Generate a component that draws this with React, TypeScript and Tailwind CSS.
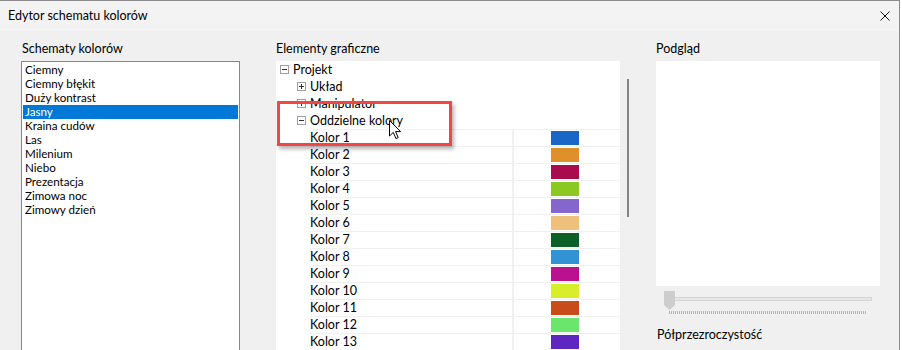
const schemes = [
  "Ciemny",
  "Ciemny błękit",
  "Duży kontrast",
  "Jasny",
  "Kraina cudów",
  "Las",
  "Milenium",
  "Niebo",
  "Prezentacja",
  "Zimowa noc",
  "Zimowy dzień",
];

const colors = [
  "#1a66c7",
  "#e0902a",
  "#a80c4c",
  "#8bc922",
  "#8466cc",
  "#eec07b",
  "#0d5f28",
  "#3193d3",
  "#b9118f",
  "#d9ee2b",
  "#c84c1a",
  "#6be66c",
  "#5f26bf",
];

function Expander({ open }: { open: boolean }) {
  return (
    <svg width="9" height="9" viewBox="0 0 9 9" className="shrink-0">
      <rect x="0.5" y="0.5" width="8" height="8" fill="#fff" stroke="#a0a0a0" />
      <path d="M2 4.5h5" stroke="#333" />
      {!open && <path d="M4.5 2v5" stroke="#333" />}
    </svg>
  );
}

function TreeNode({ label, indent, open }: { label: string; indent: number; open: boolean }) {
  return (
    <div className="flex h-[17px] items-center gap-[4px]" style={{ paddingLeft: indent }}>
      <Expander open={open} />
      <span>{label}</span>
    </div>
  );
}

function Cursor() {
  return (
    <svg width="13" height="20" viewBox="0 0 13 20" className="absolute left-[389px] top-[120px]">
      <path
        d="M0.5 0.5 L0.5 16 L4.3 12.4 L7 18.6 L9.2 17.6 L6.6 11.6 L11.6 11.6 Z"
        fill="#fff"
        stroke="#000"
      />
    </svg>
  );
}

export default function App() {
  return (
    <div className="relative h-[350px] w-[902px] overflow-hidden bg-white font-['Lato',sans-serif] text-[12.5px] leading-[16px] text-black">
      <div className="h-full w-[900px] border-t border-r border-[#8c8c8c] bg-[#f0f0f0]">
        <div className="flex h-[30px] items-center justify-between bg-[#f3f3f3] pl-[8px] pr-[9px]">
          <span>Edytor schematu kolorów</span>
          <svg width="10" height="10" viewBox="0 0 10 10">
            <path d="M0.5 0.5 L9.5 9.5 M9.5 0.5 L0.5 9.5" stroke="#111" strokeWidth="1" />
          </svg>
        </div>

        <div className="flex pl-[21px] pt-[10px]">
          {/* schemes */}
          <div className="w-[219px]">
            <div className="mb-[4px] pl-[1px]">Schematy kolorów</div>
            <div className="h-[300px] border border-[#828790] bg-white p-[1px] text-[11.6px]">
              {schemes.map((s) => (
                <div
                  key={s}
                  className={
                    s === "Jasny"
                      ? "h-[14px] bg-[#0078d7] pl-[2px] leading-[14px] text-white"
                      : "h-[14px] pl-[2px] leading-[14px]"
                  }
                >
                  {s}
                </div>
              ))}
            </div>
          </div>

          {/* tree */}
          <div className="ml-[36px] w-[380px]">
            <div className="mb-[4px]">Elementy graficzne</div>
            <div className="flex">
              <div className="h-[300px] w-[344px] bg-white">
                <TreeNode label="Projekt" indent={4} open />
                <TreeNode label="Układ" indent={21} open={false} />
                <TreeNode label="Manipulator" indent={21} open={false} />
                <TreeNode label="Oddzielne kolory" indent={21} open />
                {colors.map((c, i) => (
                  <div key={c} className="ml-[34px] flex h-[17px] border-t border-[#f0f0f0]">
                    <div className="w-[204px] border-r-2 border-[#f0f0f0] leading-[16px]">Kolor {i + 1}</div>
                    <div className="pl-[37px] pt-[1px]">
                      <div className="h-[14px] w-[28px]" style={{ backgroundColor: c }} />
                    </div>
                  </div>
                ))}
              </div>
              <div className="pl-[7px] pt-[18px]">
                <div className="h-[138px] w-[2px] bg-[#858585]" />
              </div>
            </div>
          </div>

          {/* preview */}
          <div className="w-[224px]">
            <div className="mb-[4px]">Podgląd</div>
            <div className="h-[225px] bg-white" />
            <div className="relative mt-[5px] h-[26px]">
              <div className="absolute left-[13px] right-[8px] top-[6px] h-[4px] border border-[#d6d6d6] bg-[#e7e7e7]" />
              <svg width="12" height="20" viewBox="0 0 12 20" className="absolute left-[8px] top-0">
                <path d="M0 0 H11 V14 L5.5 19 L0 14 Z" fill="#cdcdcd" />
              </svg>
              <div className="absolute left-[13px] right-[13px] top-[20px] h-[3px] bg-[repeating-linear-gradient(90deg,#b4b4b4_0_1px,transparent_1px_2px)]" />
            </div>
            <div className="mt-[10px] pl-[1px]">Półprzezroczystość</div>
          </div>
        </div>
      </div>

      {/* callout */}
      <div className="absolute left-[277px] top-[101px] h-[45px] w-[175px] border-[3px] border-[#f24646] shadow-[2px_3px_4px_rgba(0,0,0,0.3)]" />
      <Cursor />
    </div>
  );
}
